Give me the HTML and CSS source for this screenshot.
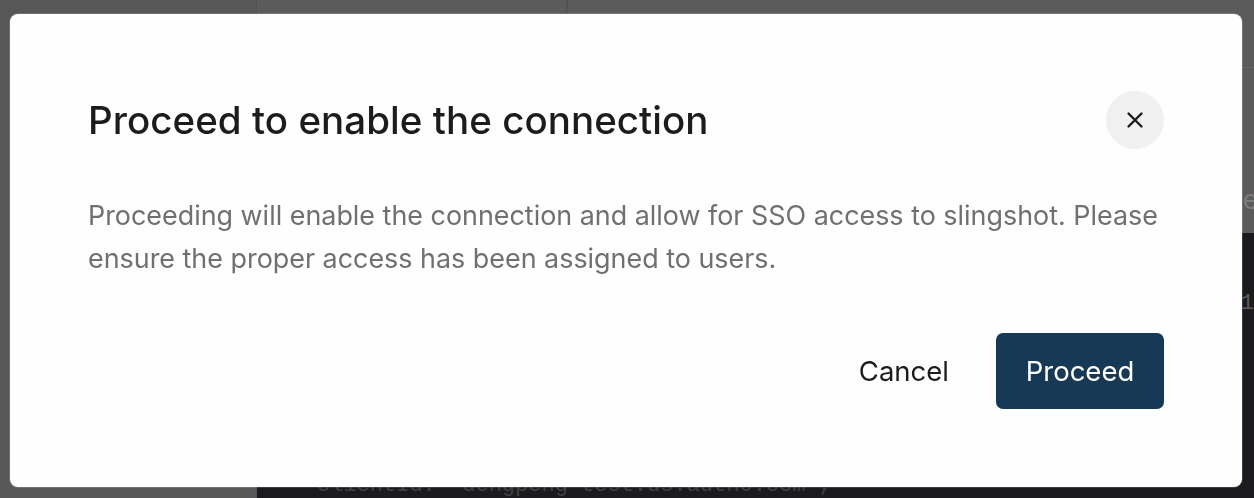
FILE: index.html
```html
<!DOCTYPE html>
<html lang="en">
<head>
  <meta charset="utf-8">
  <title>Enable connection</title>
  <link rel="stylesheet" href="styles.css">
</head>
<body>
  <div class="app">
    <div class="sidebar"></div>
    <div class="topbar">
      <div class="top-cell"></div>
      <div class="top-cell last"></div>
    </div>
    <div class="settings">
      <span class="settings-label">Write</span>
    </div>
    <div class="console">
      <div class="console-line right">1</div>
      <div class="console-line bottom">clientId: "dengpeng-test.us.auth0.com",</div>
    </div>
  </div>

  <div class="overlay">
    <div class="modal">
      <div class="modal-header">
        <h2 class="modal-title">Proceed to enable the connection</h2>
        <button class="close-btn" aria-label="Close">
          <svg width="20" height="20" viewBox="0 0 20 20">
            <path d="M3.5 3.5 L16.5 16.5 M16.5 3.5 L3.5 16.5" stroke="#1c1c1c" stroke-width="2.4" stroke-linecap="round"/>
          </svg>
        </button>
      </div>
      <p class="modal-text">Proceeding will enable the connection and allow for SSO access to slingshot. Please ensure the proper access has been assigned to users.</p>
      <div class="modal-actions">
        <button class="btn btn-cancel">Cancel</button>
        <button class="btn btn-primary">Proceed</button>
      </div>
    </div>
  </div>
</body>
</html>
```

FILE: styles.css
```css
body {
  margin: 0;
  background-color: #5b5b5b;
  font-family: Inter, "Noto Sans", sans-serif;
  overflow: hidden;
}
.app {
  display: grid;
  grid-template-columns: 257px 1fr;
  grid-template-rows: 68px 165px 1fr;
  height: 100vh;
}
.sidebar {
  grid-row: 1 / 4;
  background-color: #575757;
  border-right: 1px solid #525252;
}
.topbar {
  display: flex;
  border-bottom: 1px solid #666;
}
.top-cell {
  width: 309px;
  border-right: 2px solid #535353;
}
.top-cell.last {
  flex: 1;
  border-right: none;
}
.settings {
  display: flex;
  justify-content: flex-end;
  align-items: flex-end;
  padding-bottom: 18px;
  overflow: hidden;
  white-space: nowrap;
}
.settings-label {
  color: #7c7c7c;
  font-size: 26px;
  margin-right: -4px;
}
.console {
  background-color: #1b1b1d;
  display: flex;
  flex-direction: column;
  justify-content: space-between;
  overflow: hidden;
  font-family: "Liberation Mono", monospace;
  font-size: 22px;
  color: #3f3f42;
}
.console-line.right {
  text-align: right;
  margin-top: 58px;
  color: #5d5d60;
}
.console-line.bottom {
  padding-left: 60px;
  margin-bottom: 0;
}
.overlay {
  position: fixed;
  top: 0;
  left: 0;
  right: 0;
  bottom: 0;
  padding: 14px 12px 11px 10px;
  display: flex;
}
.modal {
  flex: 1;
  background: #fefefe;
  border-radius: 8px;
  padding: 77px 78px 0 78px;
  box-shadow: 0 0 0 1px rgba(255, 255, 255, 0.15);
}
.modal-header {
  display: flex;
  justify-content: space-between;
  align-items: center;
  height: 58px;
}
.modal-title {
  margin: 0;
  font-size: 38.5px;
  font-weight: 500;
  color: #1c1c1c;
  letter-spacing: 0.05px;
}
.close-btn {
  width: 58px;
  height: 58px;
  border-radius: 50%;
  border: none;
  background: #f0f0f0;
  display: flex;
  align-items: center;
  justify-content: center;
  padding: 0;
}
.modal-text {
  margin: 45px 0 0 0;
  font-size: 26.9px;
  line-height: 43px;
  color: #707070;
}
.modal-actions {
  display: flex;
  justify-content: flex-end;
  gap: 26px;
  margin-top: 53px;
}
.btn {
  font-family: Inter, "Noto Sans", sans-serif;
  font-size: 27.5px;
  height: 76px;
  padding: 0 21px;
  border: none;
  border-radius: 7px;
}
.btn-cancel {
  background: transparent;
  color: #1c1c1c;
}
.btn-primary {
  background: #163a56;
  color: #ffffff;
  width: 168px;
  padding: 0;
}
```
